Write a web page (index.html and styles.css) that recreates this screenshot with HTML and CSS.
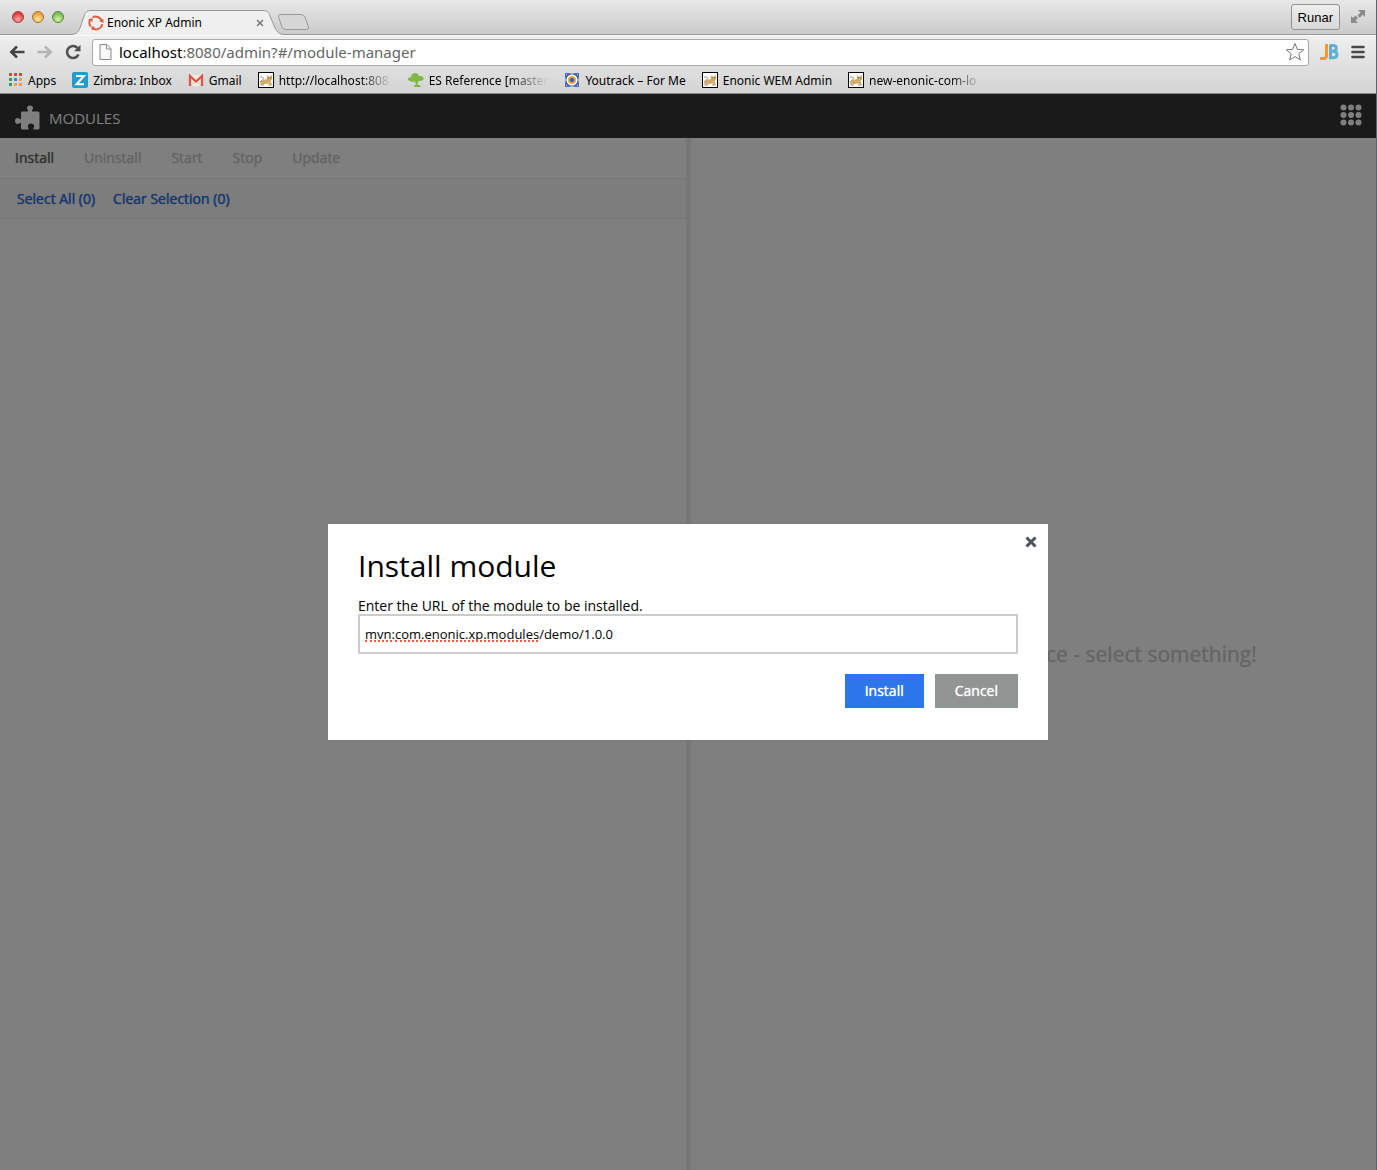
FILE: index.html
```html
<!DOCTYPE html>
<html lang="en">
<head>
<meta charset="utf-8">
<title>Enonic XP Admin</title>
<link rel="stylesheet" href="styles.css">
</head>
<body>
<svg class="defs" aria-hidden="true">
  <symbol id="tomcat" viewBox="0 0 16 16">
    <rect x=".5" y=".5" width="15" height="15" fill="#fff" stroke="#000"/>
    <path d="M2 11q0-2 3-3L9 7l-.3-4L10.500 4.500h1.500L14 3v4.500L12.500 9l1.500 4h-2l-1.500-1.500L7 12l-4 1z" fill="#d3ab66"/>
    <path d="M2 5h2.500L6 6.500 4 8 2 10M2.500 13h3.500M10 13h3.500" fill="none" stroke="#99998f"/>
    <path d="M9.800 6h1M12.200 6h1" stroke="#554"/>
  </symbol>
</svg>
<div class="window">
  <header class="chrome">
    <div class="tabstrip">
      <div class="lights"><i class="light red"></i><i class="light yellow"></i><i class="light green"></i></div>
      <div class="tab">
        <svg class="tab-shape" width="212" height="25" viewBox="0 0 212 25"><path d="M0 24.500C5 24 6 22 8 18L12 6C13.500 2 15 .5 19 .5H191C195 .5 197 2 198 6L203 18C205 22 207 24 212 24.500V26H0z" fill="#efefef"/><path d="M0 24.500C5 24 6 22 8 18L12 6C13.500 2 15 .5 19 .5H191C195 .5 197 2 198 6L203 18C205 22 207 24 212 24.500" fill="none" stroke="#999"/></svg>
        <svg class="favicon" width="16" height="16" viewBox="0 0 16 16"><g fill="none" stroke="#dc6040" stroke-width="2"><path d="M4.500 2.500A6.500 6.500 0 0 1 13.700 5.500"/><path d="M14.300 9A6.500 6.500 0 0 1 8 14.400L4 13.500"/><path d="M2.600 11.500A6.500 6.500 0 0 1 2 5"/></g><path d="M11 6l4.500-2v4zM3 11.500l4 .2-3 3.500zM0 4.500L4.500 3v4z" fill="#dc6040"/></svg>
        <span class="tab-title">Enonic XP Admin</span>
        <button class="tab-close" aria-label="Close tab"><svg width="8" height="8" viewBox="0 0 8 8"><path d="M1 1l6 6M7 1L1 7" stroke="#777" stroke-width="1.500"/></svg></button>
      </div>
      <button class="newtab" aria-label="New tab"><svg width="33" height="17" viewBox="0 0 33 17"><path d="M3 .5H24Q27 .5 28 3L31.500 13Q32 15.500 29.500 15.500H9Q6 15.500 5 13L1.500 3Q1 .5 3 .5z" fill="#d6d6d6" stroke="#999"/></svg></button>
      <button class="user">Runar</button>
      <button class="plain" aria-label="Full screen"><svg width="16" height="16" viewBox="0 0 16 16"><path d="M8 1h7v7l-2.300-2.300-3 3-2.200-2.200 3-3zM1 7l2 2 2.500-2.500 2.500 2.500L5.500 11.500 8 14H1z" fill="#8b8b8b"/></svg></button>
    </div>
    <div class="navbar">
      <button class="plain" aria-label="Back"><svg width="16" height="14" viewBox="0 0 16 14"><path d="M15.500 7H3M8 1.500L2.300 7 8 12.500" fill="none" stroke="#444" stroke-width="2.500"/></svg></button>
      <button class="plain" aria-label="Forward"><svg width="16" height="14" viewBox="0 0 16 14"><path d="M.5 7H13M8 1.500L13.700 7 8 12.500" fill="none" stroke="#b4b4b4" stroke-width="2.500"/></svg></button>
      <button class="plain" aria-label="Reload"><svg width="16" height="16" viewBox="0 0 16 16"><path d="M12.500 4A6 6 0 1 0 13.500 10.500" fill="none" stroke="#505050" stroke-width="2.600"/><path d="M15.500 .8V7.300H9z" fill="#505050"/></svg></button>
      <div class="omnibox">
        <svg width="13" height="16" viewBox="0 0 13 16"><path d="M1 .5H8L12 4.500V15.500H1zM7.500 .5V5H12" fill="#f8f8f8" stroke="#888"/></svg>
        <div class="url"><b>localhost</b>:8080/admin?#/module-manager</div>
        <svg width="20" height="20" viewBox="0 0 20 20"><path d="M10 1.500l2.400 5.900 6.300.4-4.900 4 1.600 6.200L10 14.600 4.600 18l1.600-6.200-4.900-4 6.300-.4z" fill="#fff" stroke="#777" stroke-linejoin="round"/></svg>
      </div>
      <svg width="20" height="18" viewBox="0 0 20 18"><path d="M7.500 1V12.500Q7.500 15.500 4.500 15.500H1" fill="none" stroke="#f09c2e" stroke-width="3"/><path d="M11.500 2.500H14Q17.300 2.500 17.300 5.200T14 8.300H11.500M14 8.300Q18 8.300 18 11.500T14 14.800H11.500V1.500" fill="none" stroke="#62afd4" stroke-width="3"/></svg>
      <button class="plain" aria-label="Menu"><svg width="14" height="14" viewBox="0 0 14 14"><path d="M1.500 2h11M1.500 7h11M1.500 12h11" stroke="#484848" stroke-width="2.600" stroke-linecap="round"/></svg></button>
    </div>
    <nav class="bookmarks">
      <a href="#"><svg width="14" height="14" viewBox="0 0 14 14"><path d="M0 0h3v3H0zM5 0h3v3H5zM10 0h3v3h-3z" fill="#e8413b"/><path d="M0 5h3v3H0zM0 10h3v3H0z" fill="#3a9c58"/><path d="M5 5h3v3H5z" fill="#2f87e8"/><path d="M10 5h3v3h-3zM5 10h3v3H5zM10 10h3v3h-3z" fill="#f2a52c"/></svg><span>Apps</span></a>
      <a href="#"><svg width="16" height="16" viewBox="0 0 16 16"><rect width="16" height="16" rx="2" fill="#1f9dcd"/><path d="M4 4h8l-7.500 8.300H12" fill="none" stroke="#fff" stroke-width="2"/></svg><span>Zimbra: Inbox</span></a>
      <a href="#"><svg width="16" height="16" viewBox="0 0 16 16"><path d="M1 3h14v11H1z" fill="#efe9df"/><path d="M3 14l4-5M13 14L9 9" stroke="#ccc"/><path d="M2 14V4l6 5.500L14 4v10" fill="none" stroke="#dc5146" stroke-width="2.200"/></svg><span>Gmail</span></a>
      <a href="#"><svg width="16" height="16"><use href="#tomcat"/></svg><span class="fade">http://localhost:808</span></a>
      <a href="#"><svg width="16" height="16" viewBox="0 0 16 16"><path d="M7 1l3 1 1 2 3 0 2 3-2 1.500-3 .5-1.500 2v1.500l3 1v1.500H6l0-1.500 2-1-1-3-3 .500L0 8 0 6l3-1 1-3z" fill="#80b947"/></svg><span class="fade">ES Reference [master</span></a>
      <a href="#"><svg width="16" height="16" viewBox="0 0 16 16"><path d="M1 1h4q3 1.500 6 0h4v4q-1.500 3 0 6v4h-4q-3-1.500-6 0H1v-4q1.500-3 0-6z" fill="#4669b8"/><circle cx="8" cy="8" r="5.500" fill="#fff"/><circle cx="8" cy="8" r="3.200" fill="#3c64b4" stroke="#f3a73d" stroke-width="1.800"/><path d="M2 2l1 1M14 2l-1 1M2 14l1-1M14 14l-1-1" stroke="#b7c7e8"/></svg><span>Youtrack – For Me</span></a>
      <a href="#"><svg width="16" height="16"><use href="#tomcat"/></svg><span>Enonic WEM Admin</span></a>
      <a href="#"><svg width="16" height="16"><use href="#tomcat"/></svg><span class="fade">new-enonic-com-lo</span></a>
    </nav>
  </header>
  <main class="app">
    <header class="appbar">
      <svg width="25" height="25" viewBox="0 0 25 25"><path d="M7 6.500h5.500q.8 0 .5-1.200-1.300-1-1-2.800Q12.500.5 15 .5t3 2q.3 1.800-1 2.800-.3 1.200.5 1.200H23q1.500 0 1.500 1.500v15q0 1.500-1.500 1.500h-4.500v-1.500q1-1.200.500-3-.8-1.500-3-1.500t-3 1.500q-.5 1.800.500 3v1.500H7.500Q6 24.500 6 23v-4.500q0-1-1-.5-1.500 1.500-3.500.8Q0 18 0 16t1.500-2.800Q3.500 12.500 5 14q1 .5 1-.5V8Q6 6.500 7 6.500z" fill="#fff"/></svg>
      <h1>MODULES</h1>
      <button class="plain launcher" aria-label="Applications"><svg width="22" height="22" viewBox="0 0 22 22" fill="#fff"><circle cx="3.500" cy="3.500" r="3"/><circle cx="11" cy="3.500" r="3"/><circle cx="18.500" cy="3.500" r="3"/><circle cx="3.500" cy="11" r="3"/><circle cx="11" cy="11" r="3"/><circle cx="18.500" cy="11" r="3"/><circle cx="3.500" cy="18.500" r="3"/><circle cx="11" cy="18.500" r="3"/><circle cx="18.500" cy="18.500" r="3"/></svg></button>
    </header>
    <div class="panels">
      <section class="list">
        <div class="actions"><button>Install</button><button disabled>Uninstall</button><button disabled>Start</button><button disabled>Stop</button><button disabled>Update</button></div>
        <div class="selection"><a href="#">Select All (0)</a><a href="#">Clear Selection (0)</a></div>
      </section>
      <section class="detail"><p>You are wasting this space - select something!</p></section>
    </div>
    <div class="mask">
      <form class="dialog" role="dialog" aria-labelledby="dialog-title">
        <button type="button" class="plain dialog-close" aria-label="Close"><svg width="12" height="12" viewBox="0 0 12 12"><path d="M1.500 1.500l9 9M10.500 1.500l-9 9" stroke="#4d535a" stroke-width="3"/></svg></button>
        <h2 id="dialog-title">Install module</h2>
        <label for="module-url">Enter the URL of the module to be installed.</label>
        <div class="field">
          <input id="module-url" type="text" value="mvn:com.enonic.xp.modules/demo/1.0.0" spellcheck="false">
          <span class="squiggles" aria-hidden="true"><i class="short"></i><i class="long"></i></span>
        </div>
        <div class="buttons"><button type="submit" class="primary">Install</button><button type="button">Cancel</button></div>
      </form>
    </div>
  </main>
</div>
</body>
</html>
```
FILE: styles.css
```css
* { box-sizing: border-box; }
body { margin: 0; background: #5c6070; font-family: "Open Sans", sans-serif; font-size: 14px; }
button { font: inherit; cursor: pointer; }
svg { display: block; flex: none; }
a { text-decoration: none; }
.defs { position: absolute; width: 0; height: 0; }
.plain { padding: 0; border: 0; background: none; }
.window { display: flex; flex-direction: column; min-height: 100vh; margin-right: 1px; }

/* Browser frame */
.chrome { border-bottom: 1px solid #888; background: linear-gradient(#efefef 35px, #d3d3d3); color: #000; font-family: "Noto Sans", sans-serif; font-size: 12px; }
.tabstrip { display: flex; align-items: center; height: 35px; padding: 0 10px 0 12px; border-bottom: 1px solid #999; background: linear-gradient(#e8e8e8, #cbcbcb); }
.lights { display: flex; gap: 8px; width: 64px; }
.light { width: 12px; height: 12px; border: 1px solid; border-radius: 50%; }
.red { border-color: #a33e40; background: radial-gradient(circle at 50% 75%, #ffaaa0, #e0383e 70%); }
.yellow { border-color: #a87433; background: radial-gradient(circle at 50% 75%, #ffe9a0, #eba23a 70%); }
.green { border-color: #558b40; background: radial-gradient(circle at 50% 75%, #d8f7a8, #78b755 70%); }
.tab { position: relative; display: flex; align-items: center; align-self: flex-end; width: 204px; height: 25px; margin-bottom: -1px; padding: 0 16px 0 12px; }
.tab-shape { position: absolute; left: -4px; top: 0; }
.favicon, .tab-title, .tab-close { position: relative; }
.tab-title { flex: 1; margin-left: 3px; white-space: nowrap; }
.tab-close { padding: 0; border: 0; background: none; }
.newtab { margin: 10px auto 0 -3px; padding: 0; border: 0; background: none; }
.user { height: 26px; margin-right: 10px; padding: 0 6px; border: 1px solid #929292; border-radius: 3px; background: linear-gradient(#eee, #d8d8d8); font-family: "Liberation Sans", sans-serif; font-size: 13px; }
.navbar { display: flex; align-items: center; gap: 12px; height: 33px; padding: 0 11px 0 9px; border-top: 1px solid #f8f8f8; }
.omnibox { display: flex; flex: 1; align-items: center; height: 27px; margin: 0 -2px 0 -1px; padding: 0 3px 0 6px; border: 1px solid #aaa; border-radius: 3px; background: #fff; }
.url { flex: 1; margin-left: 7px; color: #666; font-size: 15px; }
.url b { color: #000; font-weight: 400; }
.bookmarks { display: flex; align-items: center; gap: 16px; height: 25px; padding: 0 9px 1px; }
.bookmarks a { display: flex; align-items: center; gap: 5px; color: #000; white-space: nowrap; }
.fade { min-width: 113px; mask-image: linear-gradient(to right, #000 80px, transparent); }

/* Module manager */
.app { position: relative; display: flex; flex: 1; flex-direction: column; background: #fff; }
.appbar { display: flex; align-items: center; gap: 9px; height: 44px; padding: 3px 14px 0 15px; background: #343434; color: #fff; }
.appbar h1 { margin: 0; font-size: 15px; font-weight: 400; }
.launcher { margin: -5px 0 0 auto; }
.panels { display: flex; flex: 1; }
.list { flex: 1; border-right: 5px solid #eee; }
.actions, .selection { display: flex; align-items: center; border-bottom: 1px solid #ececec; }
.actions { gap: 30px; height: 41px; padding: 0 15px 2px; }
.actions button { padding: 0; border: 0; background: none; color: #666; text-shadow: 0 0 1px currentColor; }
.actions button:disabled { color: #c8c8c8; }
.selection { gap: 18px; height: 40px; padding: 0 17px; background: #fafafa; }
.selection a { color: #2c6ee0; text-shadow: 0 0 1px currentColor; }
.detail { display: flex; flex: 1; align-items: center; justify-content: center; }
.detail p { margin: 0; color: #ccc; font-size: 21px; white-space: nowrap; text-shadow: 0 0 1px currentColor; }

/* Install dialog */
.mask { position: absolute; inset: 0; display: flex; align-items: center; justify-content: center; background: rgba(0, 0, 0, 0.5); }
.dialog { position: relative; width: 720px; padding: 22px 30px 32px; background: #fff; color: #000; }
.dialog-close { position: absolute; top: 12px; right: 11px; }
.dialog h2 { margin: 0 0 12px; font-size: 30px; font-weight: 400; line-height: 40px; }
.dialog label { display: block; line-height: 16px; }
.field { position: relative; }
.field input { display: block; width: 100%; height: 40px; padding: 0 5px; border: 2px solid #ccc; border-radius: 0; outline: 0; color: #000; font: 13px "Open Sans", sans-serif; }
.squiggles { position: absolute; left: 7px; top: 26px; display: flex; gap: 3px; pointer-events: none; }
.squiggles i { border-bottom: 2px dotted #ff5a3c; }
.short { width: 27px; }
.long { width: 143px; }
.buttons { display: flex; justify-content: flex-end; gap: 11px; margin-top: 20px; }
.buttons button { height: 34px; padding: 0 20px 1px; border: 0; background: #909594; color: #fff; text-shadow: 0 0 1px currentColor; }
.buttons .primary { background: #2c76e9; }
```
